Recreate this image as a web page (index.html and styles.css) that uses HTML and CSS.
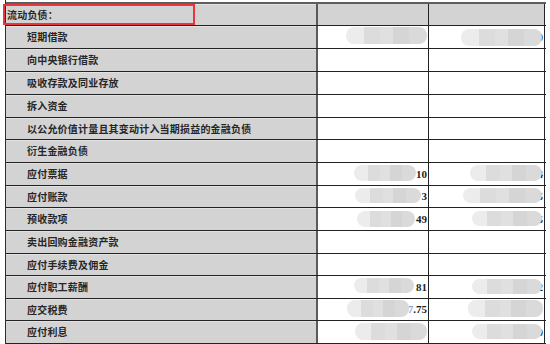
FILE: index.html
```html
<!DOCTYPE html>
<html lang="zh-CN">
<head>
<meta charset="utf-8">
<title>流动负债</title>
<link rel="stylesheet" href="styles.css">
</head>
<body>
<div class="page">
  <div class="sheet">
    <div class="grid">
      <div class="row head h22">
        <div class="c1"><span class="lbl top">流动负债：</span></div>
        <div class="c2"></div>
        <div class="c3"></div>
      </div>
      <div class="row">
        <div class="c1"><span class="lbl">短期借款</span></div>
        <div class="c2"><span class="blob b-a"></span></div>
        <div class="c3"><span class="num">0</span><span class="blob b-k"></span></div>
      </div>
      <div class="row">
        <div class="c1"><span class="lbl">向中央银行借款</span></div>
        <div class="c2"></div>
        <div class="c3"></div>
      </div>
      <div class="row">
        <div class="c1"><span class="lbl">吸收存款及同业存放</span></div>
        <div class="c2"></div>
        <div class="c3"></div>
      </div>
      <div class="row">
        <div class="c1"><span class="lbl">拆入资金</span></div>
        <div class="c2"></div>
        <div class="c3"></div>
      </div>
      <div class="row h22">
        <div class="c1"><span class="lbl">以公允价值计量且其变动计入当期损益的金融负债</span></div>
        <div class="c2"></div>
        <div class="c3"></div>
      </div>
      <div class="row">
        <div class="c1"><span class="lbl">衍生金融负债</span></div>
        <div class="c2"></div>
        <div class="c3"></div>
      </div>
      <div class="row">
        <div class="c1"><span class="lbl">应付票据</span></div>
        <div class="c2"><span class="num">10</span><span class="blob b-b"></span></div>
        <div class="c3"><span class="num">4</span><span class="blob b-l"></span></div>
      </div>
      <div class="row h22">
        <div class="c1"><span class="lbl">应付账款</span></div>
        <div class="c2"><span class="num">3</span><span class="blob b-c"></span></div>
        <div class="c3"><span class="num">5</span><span class="blob b-m"></span></div>
      </div>
      <div class="row">
        <div class="c1"><span class="lbl">预收款项</span></div>
        <div class="c2"><span class="num">49</span><span class="blob b-d"></span></div>
        <div class="c3"><span class="num">5</span><span class="blob b-n"></span></div>
      </div>
      <div class="row">
        <div class="c1"><span class="lbl">卖出回购金融资产款</span></div>
        <div class="c2"></div>
        <div class="c3"></div>
      </div>
      <div class="row h22">
        <div class="c1"><span class="lbl">应付手续费及佣金</span></div>
        <div class="c2"></div>
        <div class="c3"></div>
      </div>
      <div class="row">
        <div class="c1"><span class="lbl">应付职工薪酬</span></div>
        <div class="c2"><span class="num">81</span><span class="blob b-e"></span></div>
        <div class="c3"><span class="num">2</span><span class="blob b-n"></span></div>
      </div>
      <div class="row h22">
        <div class="c1"><span class="lbl">应交税费</span></div>
        <div class="c2"><span class="num"><span class="blue">7</span>.75</span><span class="blob b-f"></span></div>
        <div class="c3"><span class="blob b-o"></span></div>
      </div>
      <div class="row">
        <div class="c1"><span class="lbl">应付利息</span></div>
        <div class="c2"><span class="blob b-g"></span></div>
        <div class="c3"><span class="num">0</span><span class="blob b-n"></span></div>
      </div>
    </div>
  </div>
  <div class="mark"></div>
</div>
</body>
</html>
```

FILE: styles.css
```css
html, body {
  margin: 0;
  padding: 0;
  background: #ffffff;
}

.page {
  position: relative;
  width: 550px;
  height: 344px;
  overflow: hidden;
}

.sheet {
  margin-left: 5px;
  width: 540px;
  padding-top: 2px;
  border-left: 1px solid #2e2e2e;
  height: 342px;
}

.grid {
  border-top: 2px solid #5e5e5e;
}

.row {
  display: grid;
  grid-template-columns: 312px 111px 116px;
  height: 23px;
  box-sizing: border-box;
  border-bottom: 1px solid #232323;
}

.row.h22 {
  height: 22px;
}

.c1, .c2, .c3 {
  position: relative;
  display: flex;
  align-items: center;
  overflow: hidden;
  box-sizing: border-box;
}

.c1 {
  background: #d3d3d3;
  border-right: 2px solid #5a5a5a;
  box-shadow: inset 0 1px 0 #e2e2e2;
}

.c2, .c3 {
  background: #ffffff;
  border-right: 1px solid #232323;
  justify-content: flex-end;
}

.head .c2, .head .c3 {
  background: #d3d3d3;
}

.lbl {
  padding-left: 21px;
  font-family: "Noto Sans CJK SC", "Noto Sans CJK JP", sans-serif;
  font-size: 10px;
  font-weight: 700;
  letter-spacing: 0.2px;
  color: #262626;
  white-space: nowrap;
  line-height: 1;
}

.lbl.top {
  padding-left: 1px;
}

.num {
  font-family: "Liberation Serif", "Noto Sans CJK SC", serif;
  font-size: 11px;
  font-weight: 700;
  color: #1e1e1e;
  padding-right: 1px;
  line-height: 1;
}

.blue {
  color: #8aa6d8;
}

.blob {
  position: absolute;
  top: 2px;
  height: 16px;
  border-radius: 8px;
  background: linear-gradient(90deg,
    #ececec 0 22%,
    #dcdcdc 22% 42%,
    #e0e0e0 42% 58%,
    #d5d5d5 58% 78%,
    #dadada 78% 100%);
}

/* column 2 mosaics */
.b-a { right: 1px; width: 81px; top: 1px; height: 17px; }
.b-b { right: 12px; width: 62px; top: 2px; }
.b-c { right: 7px; width: 66px; top: 2px; height: 15px; }
.b-d { right: 13px; width: 58px; top: 3px; }
.b-e { right: 14px; width: 60px; top: 2px; height: 15px; }
.b-f { right: 19px; width: 62px; top: 1px; height: 17px; }
.b-g { right: 1px; width: 72px; top: 2px; height: 17px; }

/* column 3 mosaics */
.b-k { right: 2px; width: 81px; top: 3px; height: 17px; }
.b-l { right: 2px; width: 72px; top: 2px; }
.b-m { right: 2px; width: 79px; top: 2px; height: 15px; }
.b-n { right: 2px; width: 70px; top: 3px; height: 15px; }
.b-o { right: 1px; width: 75px; top: 1px; height: 17px; }

.mark {
  position: absolute;
  left: 3px;
  top: 4px;
  width: 192px;
  height: 21px;
  box-sizing: border-box;
  border: 2px solid #e8363c;
}
```
